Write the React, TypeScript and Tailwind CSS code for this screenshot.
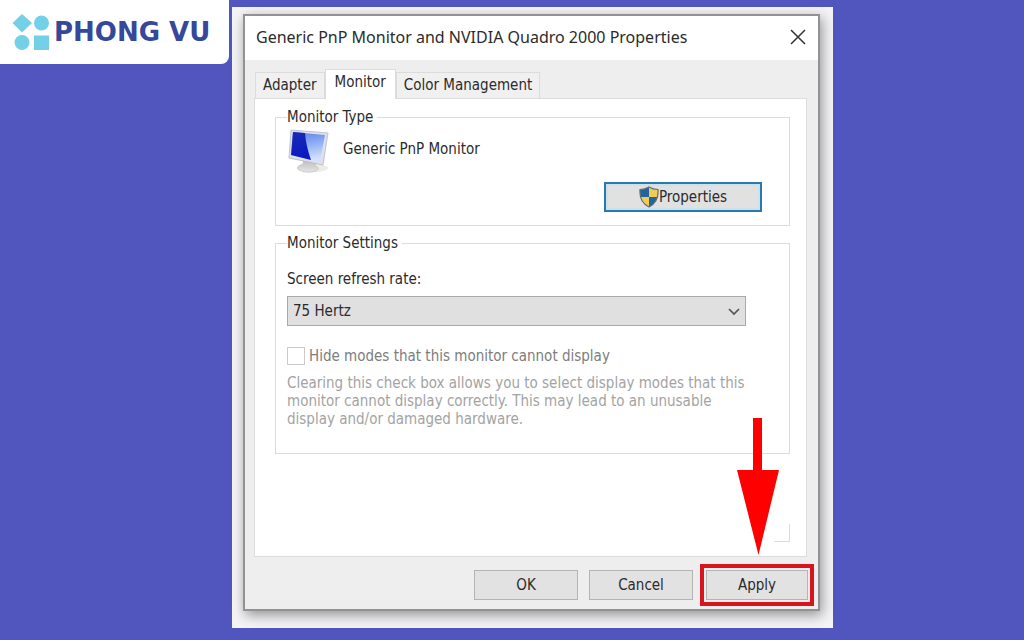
import { useState } from "react";

const tabs = ["Adapter", "Monitor", "Color Management"];
const rates = ["60 Hertz", "75 Hertz"];

function Logo() {
  return (
    <header className="flex h-16 w-[229px] shrink-0 items-center gap-1 rounded-br-lg bg-white pl-3">
      <svg className="h-9 w-[38px] shrink-0" viewBox="0 0 38 36" fill="#74d0e6" aria-hidden="true">
        <path d="M10 0 L20 9 L10 18.500 L0.500 9 Z" />
        <circle cx="29.500" cy="9" r="7.500" />
        <circle cx="10" cy="28.500" r="7.500" />
        <rect x="22" y="21.500" width="15" height="14.500" />
      </svg>
      <span className="whitespace-nowrap font-['DejaVu_Sans'] text-[26px] font-bold leading-6 text-[#35489a]">
        PHONG VU
      </span>
    </header>
  );
}

function MonitorIcon() {
  return (
    <svg className="h-11 w-11 shrink-0" viewBox="0 0 44 44" aria-hidden="true">
      <defs>
        <linearGradient id="screen" x1="0" y1="0" x2="0.200" y2="1">
          <stop offset="0" stopColor="#5a7de8" />
          <stop offset="0.500" stopColor="#8fb0f4" />
          <stop offset="1" stopColor="#d3e2fc" />
        </linearGradient>
        <linearGradient id="glow" x1="0" y1="0" x2="0.300" y2="1">
          <stop offset="0" stopColor="#1a2cae" />
          <stop offset="1" stopColor="#0a18c8" />
        </linearGradient>
        <linearGradient id="stand" x1="0" y1="0" x2="0" y2="1">
          <stop offset="0" stopColor="#b5b5b5" />
          <stop offset="1" stopColor="#e6e6e6" />
        </linearGradient>
      </defs>
      <ellipse cx="27" cy="39" rx="14" ry="4" fill="#ecebe8" />
      <path d="M17 29 L29 33 L28 37 Q34 39 29 42 Q20 45 12 41 Q7 38 16 35 Z" fill="url(#stand)" stroke="#b9b9b9" strokeWidth="0.600" />
      <path d="M4 1 L41 4 L36 36 L2 29 Z" fill="#dfe1ea" stroke="#b3b6c8" strokeWidth="0.800" />
      <path d="M6 3 L38 6 L33 33 L4 26 Z" fill="url(#screen)" />
      <path d="M6 3 L18 4 Q19 17 24 31 L4 26 Z" fill="url(#glow)" />
    </svg>
  );
}

function ShieldIcon() {
  return (
    <svg className="h-[22px] w-5 shrink-0" viewBox="0 0 20 22" aria-hidden="true">
      <clipPath id="shield">
        <path d="M10 1 Q14 3.500 19 3.500 Q20 16 10 21 Q0 16 1 3.500 Q6 3.500 10 1 Z" />
      </clipPath>
      <g clipPath="url(#shield)">
        <rect width="10" height="11" fill="#22649c" />
        <rect x="10" width="10" height="11" fill="#f2cb57" />
        <rect y="11" width="10" height="11" fill="#f2cb57" />
        <rect x="10" y="11" width="10" height="11" fill="#22649c" />
      </g>
      <path
        d="M10 1 Q14 3.500 19 3.500 Q20 16 10 21 Q0 16 1 3.500 Q6 3.500 10 1 Z"
        fill="none"
        stroke="#5b6f78"
        strokeWidth="1.200"
      />
    </svg>
  );
}

function Arrow() {
  return (
    <svg className="pointer-events-none absolute bottom-[54px] right-[39px] h-[137px] w-[42px]" viewBox="0 0 42 137" fill="#fe0000" aria-hidden="true">
      <path d="M16 0 H25 V52 H42 L21.500 137 L0 52 H16 Z" />
    </svg>
  );
}

export default function App() {
  const [active, setActive] = useState("Monitor");
  const [rate, setRate] = useState("75 Hertz");

  return (
    <div className="flex min-h-screen items-start gap-[3px] bg-[#5156bf] font-['DejaVu_Sans_Condensed','DejaVu_Sans',sans-serif] text-[15px] text-[#2b2b2b]">
      <Logo />
      <main className="mt-[7px] max-w-[601px] flex-1 bg-[#f4f4f6] pb-[17px] pl-[11px] pr-[13px] pt-[7px]">
        <div className="relative border-2 border-[#929292] bg-[#eeeeee] shadow-[2px_4px_12px_rgba(0,0,0,0.4)]">
          <div className="flex h-11 items-center justify-between bg-white pb-[2px] pl-[11px] pr-3">
            <h1 className="font-['Noto_Sans',sans-serif] text-base">
              Generic PnP Monitor and NVIDIA Quadro 2000 Properties
            </h1>
            <button type="button" aria-label="Close">
              <svg className="h-4 w-4" viewBox="0 0 16 16" fill="none" stroke="#333333" strokeWidth="1.500">
                <path d="M1 1 L15 15 M15 1 L1 15" />
              </svg>
            </button>
          </div>

          <div className="pb-[3px] pl-[9px] pr-[11px] pt-[9px]">
            <div role="tablist" className="flex items-end pl-px">
              {tabs.map((tab) => (
                <button
                  key={tab}
                  type="button"
                  role="tab"
                  aria-selected={tab === active}
                  onClick={() => setActive(tab)}
                  className={
                    tab === active
                      ? "-mb-px h-[30px] border border-b-0 border-[#dcdcdc] bg-white px-[9px] pb-1"
                      : "h-[26px] border border-b-0 border-[#dcdcdc] bg-[#f0f0f0] px-[7px]"
                  }
                >
                  {tab}
                </button>
              ))}
            </div>

            <div role="tabpanel" className="border border-[#dcdcdc] bg-white pb-[14px] pl-5 pr-4 pt-2">
              <fieldset className="h-[119px] border border-[#dcdcdc] pl-[11px] pr-[27px]">
                <legend className="pr-1 leading-5">Monitor Type</legend>
                <div className="flex items-start gap-3 pt-[2px]">
                  <MonitorIcon />
                  <span className="leading-10">Generic PnP Monitor</span>
                </div>
                <div className="flex justify-end pt-[9px]">
                  <button
                    type="button"
                    className="flex h-[30px] w-[158px] items-center justify-center border-2 border-[#2f78a4] bg-[#e1e1e1] shadow-[inset_0_0_0_2px_#c5e3f3]"
                  >
                    <ShieldIcon />
                    Properties
                  </button>
                </div>
              </fieldset>

              <fieldset className="mt-[7px] h-[221px] border border-[#dcdcdc] pl-[11px] pr-[43px]">
                <legend className="pr-1 leading-5">Monitor Settings</legend>
                <label htmlFor="rate" className="block pt-4 leading-5">
                  Screen refresh rate:
                </label>
                <div className="relative mt-[7px]">
                  <select
                    id="rate"
                    value={rate}
                    onChange={(e) => setRate(e.target.value)}
                    className="h-[30px] w-full appearance-none border border-[#a9a9a9] bg-[#e0e0e0] px-[5px]"
                  >
                    {rates.map((r) => (
                      <option key={r}>{r}</option>
                    ))}
                  </select>
                  <svg className="pointer-events-none absolute right-[6px] top-3 h-2 w-3" viewBox="0 0 12 8" fill="none" stroke="#555555" strokeWidth="1.700">
                    <path d="M1 1 L6 6 L11 1" />
                  </svg>
                </div>
                <label className="mt-5 flex items-center gap-1 leading-5 text-[#7d7d7d]">
                  <input type="checkbox" disabled className="h-[18px] w-[18px] appearance-none border border-[#cccccc] bg-white" />
                  Hide modes that this monitor cannot display
                </label>
                <p className="mt-2 leading-[18px] text-[#a3a3a3]">
                  Clearing this check box allows you to select display modes that this monitor cannot display correctly.
                  This may lead to an unusable display and/or damaged hardware.
                </p>
              </fieldset>

              <div className="mt-[70px] flex justify-end">
                <div className="h-[18px] w-4 border-b border-r border-[#dcdcdc]" />
              </div>
            </div>

            <div className="-mr-[7px] mt-[7px] flex items-center justify-end gap-[7px]">
              <div className="flex gap-[11px]">
                <button type="button" className="h-[30px] w-[104px] border border-[#b4b4b4] bg-[#e2e2e2]">
                  OK
                </button>
                <button type="button" className="h-[30px] w-[104px] border border-[#b4b4b4] bg-[#e2e2e2]">
                  Cancel
                </button>
              </div>
              <div className="border-4 border-[#d8141c] p-[2px]">
                <button type="button" className="h-[30px] w-[102px] border border-[#b4b4b4] bg-[#e2e2e2]">
                  Apply
                </button>
              </div>
            </div>
          </div>
          <Arrow />
        </div>
      </main>
    </div>
  );
}
